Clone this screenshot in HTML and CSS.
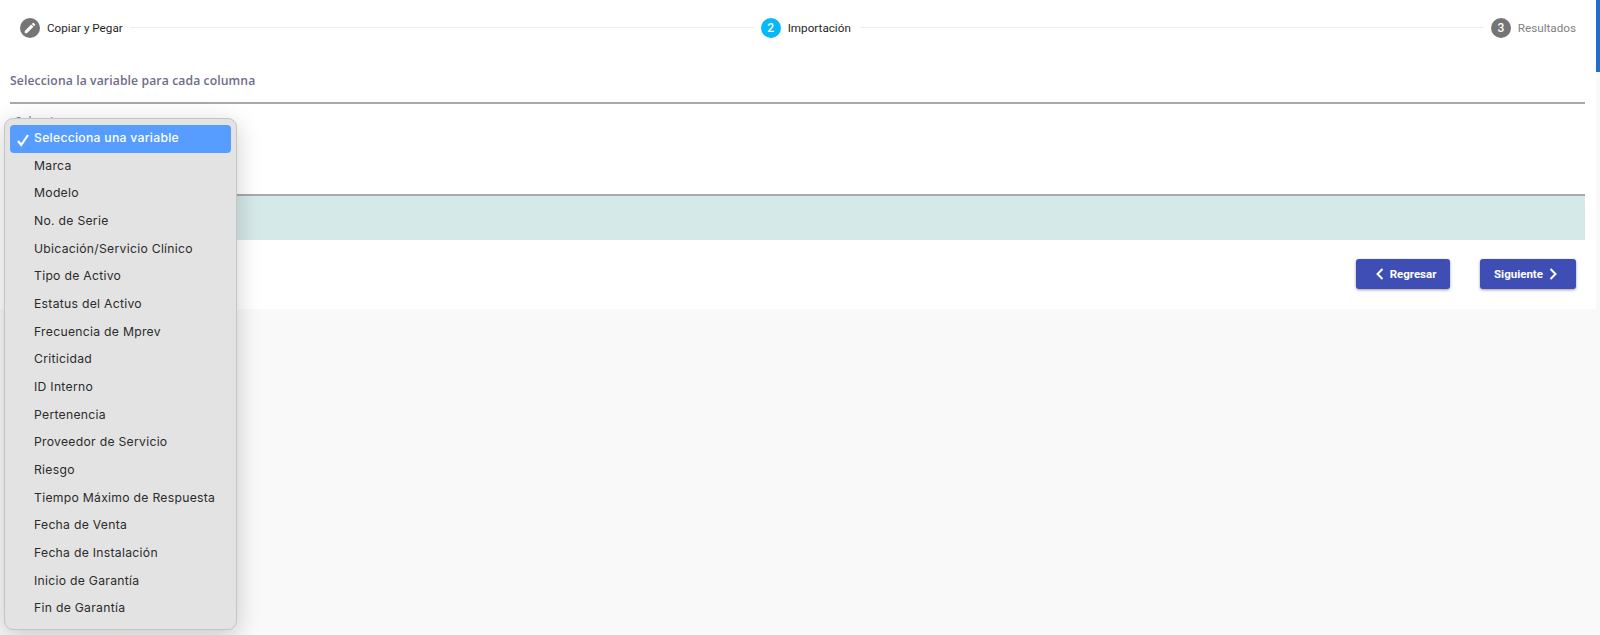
FILE: index.html
```html
<!DOCTYPE html>
<html lang="es">
<head>
<meta charset="utf-8">
<title>Importación</title>
<link rel="stylesheet" href="styles.css">
</head>
<body>
<div class="scroll-thumb"></div>
<main class="card">
  <nav class="stepper">
    <div class="step">
      <span class="badge badge-grey">
        <svg class="pencil" viewBox="0 0 24 24"><path d="M3 17.25V21h3.75L17.81 9.94l-3.75-3.75L3 17.25zM20.71 7.04a1 1 0 0 0 0-1.41l-2.34-2.34a1 1 0 0 0-1.41 0l-1.83 1.83 3.75 3.75 1.83-1.83z"/></svg>
      </span>
      <span class="step-label">Copiar y Pegar</span>
    </div>
    <div class="step-line"></div>
    <div class="step step-current">
      <span class="badge badge-cyan">2</span>
      <span class="step-label">Importación</span>
    </div>
    <div class="step-line"></div>
    <div class="step">
      <span class="badge badge-grey">3</span>
      <span class="step-label step-label-muted">Resultados</span>
    </div>
  </nav>
  <section class="table-area">
    <h2 class="heading">Selecciona la variable para cada columna</h2>
    <div class="select-row"><span class="select-peek">Selecciona</span></div>
    <div class="teal-row"></div>
  </section>
  <footer class="actions">
    <button class="btn btn-back" type="button">
      <svg class="chev" viewBox="0 0 10 14"><path d="M7.5 2 2.5 7l5 5"/></svg>
      Regresar
    </button>
    <button class="btn btn-next" type="button">
      Siguiente
      <svg class="chev" viewBox="0 0 10 14"><path d="M2.5 2l5 5-5 5"/></svg>
    </button>
  </footer>
</main>

<ul class="menu">
  <li class="menu-item menu-item-active">
    <svg class="check" viewBox="0 0 14 14"><path d="M2 8l3.2 4L12 2"/></svg>
    Selecciona una variable
  </li>
  <li class="menu-item">Marca</li>
  <li class="menu-item">Modelo</li>
  <li class="menu-item">No. de Serie</li>
  <li class="menu-item">Ubicación/Servicio Clínico</li>
  <li class="menu-item">Tipo de Activo</li>
  <li class="menu-item">Estatus del Activo</li>
  <li class="menu-item">Frecuencia de Mprev</li>
  <li class="menu-item">Criticidad</li>
  <li class="menu-item">ID Interno</li>
  <li class="menu-item">Pertenencia</li>
  <li class="menu-item">Proveedor de Servicio</li>
  <li class="menu-item">Riesgo</li>
  <li class="menu-item">Tiempo Máximo de Respuesta</li>
  <li class="menu-item">Fecha de Venta</li>
  <li class="menu-item">Fecha de Instalación</li>
  <li class="menu-item">Inicio de Garantía</li>
  <li class="menu-item">Fin de Garantía</li>
</ul>
</body>
</html>
```

FILE: styles.css
```css
* { box-sizing: border-box; }

html, body {
  margin: 0;
  height: 635px;
  overflow: hidden;
  background: #f9f9f9;
  font-family: Roboto, "Liberation Sans", sans-serif;
}

.card {
  width: 1596px;
  height: 309px;
  background: #fff;
  padding: 0 11px 0 10px;
}

.scroll-thumb {
  position: absolute;
  top: 0;
  right: 0;
  width: 4px;
  height: 72px;
  background: #1e6fce;
}

.stepper {
  height: 55px;
  display: flex;
  align-items: center;
  padding: 0 9px 0 10px;
  gap: 7px;
}

.step {
  display: flex;
  align-items: center;
  gap: 7px;
}

.step-current { margin-right: 2px; }

.step-line {
  flex: 1;
  height: 1px;
  background: #eeeeee;
}

.badge {
  width: 20px;
  height: 20px;
  border-radius: 50%;
  display: flex;
  align-items: center;
  justify-content: center;
  color: #fff;
  font-size: 12px;
  font-weight: 500;
}

.badge-grey { background: #757575; }
.badge-cyan { background: #03b9f7; }

.pencil {
  width: 14px;
  height: 14px;
  fill: #fff;
}

.step-label {
  font-size: 11.7px;
  color: #1f1f1f;
}

.step-label-muted { color: #7f7f7f; }

.table-area { display: flex; flex-direction: column; }

.heading {
  margin: 0;
  height: 49px;
  border-bottom: 2px solid #a9a9a9;
  padding-top: 18px;
  font-family: "Open Sans", sans-serif;
  font-size: 12.2px;
  font-weight: 600;
  letter-spacing: 0.1px;
  line-height: 16px;
  color: #6d6d86;
}

.select-row {
  height: 92px;
  border-bottom: 2px solid #a9a9a9;
  padding: 7px 5px;
}

.select-peek {
  font-size: 12px;
  color: #6c7bb0;
}

.teal-row {
  height: 44px;
  background: #d5e9e8;
}

.actions {
  display: flex;
  justify-content: flex-end;
  gap: 30px;
  padding: 19px 9px 0 0;
}

.btn {
  height: 30px;
  border: 0;
  border-radius: 3px;
  background: #3f4eb4;
  color: #fff;
  font-family: Roboto, sans-serif;
  font-size: 11.5px;
  font-weight: 700;
  display: flex;
  align-items: center;
  justify-content: center;
  gap: 5px;
  padding: 0;
  box-shadow: 0 1px 3px rgba(0, 0, 0, 0.4);
}

.btn-back { width: 94px; padding-left: 5px; }
.btn-next { width: 96px; padding-right: 4px; }

.chev {
  width: 10px;
  height: 14px;
  fill: none;
  stroke: #fff;
  stroke-width: 2;
}

.menu {
  position: absolute;
  left: 4px;
  top: 118px;
  width: 233px;
  height: 512px;
  margin: 0;
  padding: 6px 5px;
  list-style: none;
  background: #e3e3e3;
  border: 1px solid #c4c4c4;
  border-radius: 9px;
  box-shadow: 0 6px 24px rgba(0, 0, 0, 0.2);
  font-family: Inter, Roboto, sans-serif;
  font-size: 12.2px;
  letter-spacing: 0.28px;
  color: #2b2b2b;
}

.menu-item {
  position: relative;
  height: 27.67px;
  line-height: 25px;
  padding-left: 24px;
  border-radius: 4px;
}

.menu-item-active {
  background: #579dff;
  color: #fff;
  font-weight: 500;
}

.check {
  position: absolute;
  left: 6px;
  top: 8px;
  width: 14px;
  height: 14px;
  fill: none;
  stroke: #fff;
  stroke-width: 2.2;
}
```
